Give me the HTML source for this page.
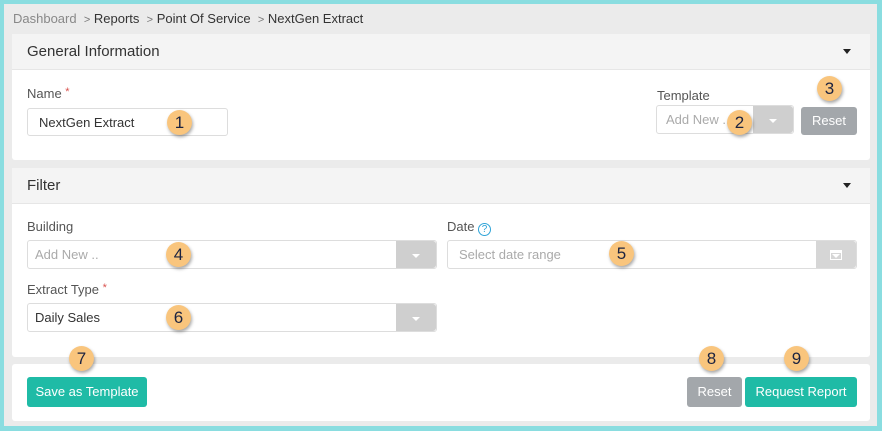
<!DOCTYPE html>
<html><head><style>
*{box-sizing:border-box;margin:0;padding:0}
body{width:882px;height:431px;background:#8adde0;font-family:"Liberation Sans",sans-serif;position:relative;overflow:hidden}
.page{position:absolute;left:4px;top:4px;right:5px;bottom:5px;background:#ebebeb}
.a{position:absolute}
.panel{position:absolute;left:12px;width:858px;background:#fff;border-radius:3px}
.hd{background:#f4f4f4;height:36px;border-bottom:1px solid #e6e6e6;font-size:15px;color:#333;padding:9px 15px;position:relative}
.hd:after{content:"";position:absolute;right:19px;top:15px;border:4px solid transparent;border-top:5px solid #222}
.lbl{font-size:13px;color:#555}
.req{color:#d9534f;font-size:11px;vertical-align:top}
.inp{border:1px solid #ddd;border-radius:3px;background:#fff;font-size:13px;color:#333;padding:6px 11px}
.ph{color:#aaa}
.dd{position:absolute;right:0;top:0;bottom:0;width:40px;background:#cfcfcf;border-radius:0 3px 3px 0}
.dd:after{content:"";position:absolute;left:16px;top:13px;border:4px solid transparent;border-top:4px solid #fff}
.btn{position:absolute;border-radius:3px;color:#fff;font-size:13px;text-align:center;line-height:30px}
.b{position:absolute;width:25px;height:25px;border-radius:50%;background:#f9c57d;box-shadow:1px 2px 3px rgba(0,0,0,.35);color:#1c2340;font-size:17px;text-align:center;line-height:25px;margin:-12px 0 0 -12px}
</style></head><body>
<div class="page"></div>
<div class="a" style="left:13px;top:11px;font-size:13px;color:#333"><span style="color:#888">Dashboard</span> &nbsp;<span style="color:#777;font-size:11px">&gt;</span> Reports &nbsp;<span style="color:#777;font-size:11px">&gt;</span> Point Of Service &nbsp;<span style="color:#777;font-size:11px">&gt;</span> NextGen Extract</div>

<div class="panel" style="top:34px;height:126px"><div class="hd">General Information</div></div>
<div class="a lbl" style="left:27px;top:86px">Name <span class="req">*</span></div>
<div class="a inp" style="left:27px;top:108px;width:201px;height:28px">NextGen Extract</div>
<div class="a lbl" style="left:657px;top:88px">Template</div>
<div class="a inp ph" style="left:656px;top:105px;width:138px;height:29px;padding-left:9px">Add New ..<div class="dd"></div></div>
<div class="btn" style="left:801px;top:107px;width:56px;height:28px;line-height:28px;background:#a3a7ab">Reset</div>

<div class="panel" style="top:168px;height:189px"><div class="hd">Filter</div></div>
<div class="a lbl" style="left:27px;top:219px">Building</div>
<div class="a inp ph" style="left:27px;top:240px;width:410px;height:29px;padding-left:7px">Add New ..<div class="dd"></div></div>
<div class="a lbl" style="left:447px;top:219px">Date <span style="display:inline-block;width:13px;height:13px;border:1px solid #2fa4d8;border-radius:50%;color:#2fa4d8;font-size:10px;text-align:center;line-height:11px;vertical-align:-1px">?</span></div>
<div class="a inp ph" style="left:447px;top:240px;width:410px;height:29px">Select date range<div class="dd" style="background:#d6d6d6"><span style="position:absolute;left:14px;top:9px;width:12px;height:10px;border:1.5px solid #fff;border-top-width:3px"></span></div></div>
<div class="a lbl" style="left:27px;top:282px">Extract Type <span class="req">*</span></div>
<div class="a inp" style="left:27px;top:303px;width:410px;height:29px;padding-left:7px">Daily Sales<div class="dd"></div></div>

<div class="panel" style="top:364px;height:57px"></div>
<div class="btn" style="left:27px;top:377px;width:120px;background:#1fbba6">Save as Template</div>
<div class="btn" style="left:687px;top:377px;width:55px;background:#a3a7ab">Reset</div>
<div class="btn" style="left:745px;top:377px;width:112px;background:#1fbba6">Request Report</div>

<div class="b" style="left:179px;top:122px">1</div>
<div class="b" style="left:739px;top:122px">2</div>
<div class="b" style="left:829px;top:88px">3</div>
<div class="b" style="left:178px;top:254px">4</div>
<div class="b" style="left:621px;top:253px">5</div>
<div class="b" style="left:178px;top:317px">6</div>
<div class="b" style="left:81px;top:358px">7</div>
<div class="b" style="left:711px;top:358px">8</div>
<div class="b" style="left:796px;top:358px">9</div>
</body></html>
